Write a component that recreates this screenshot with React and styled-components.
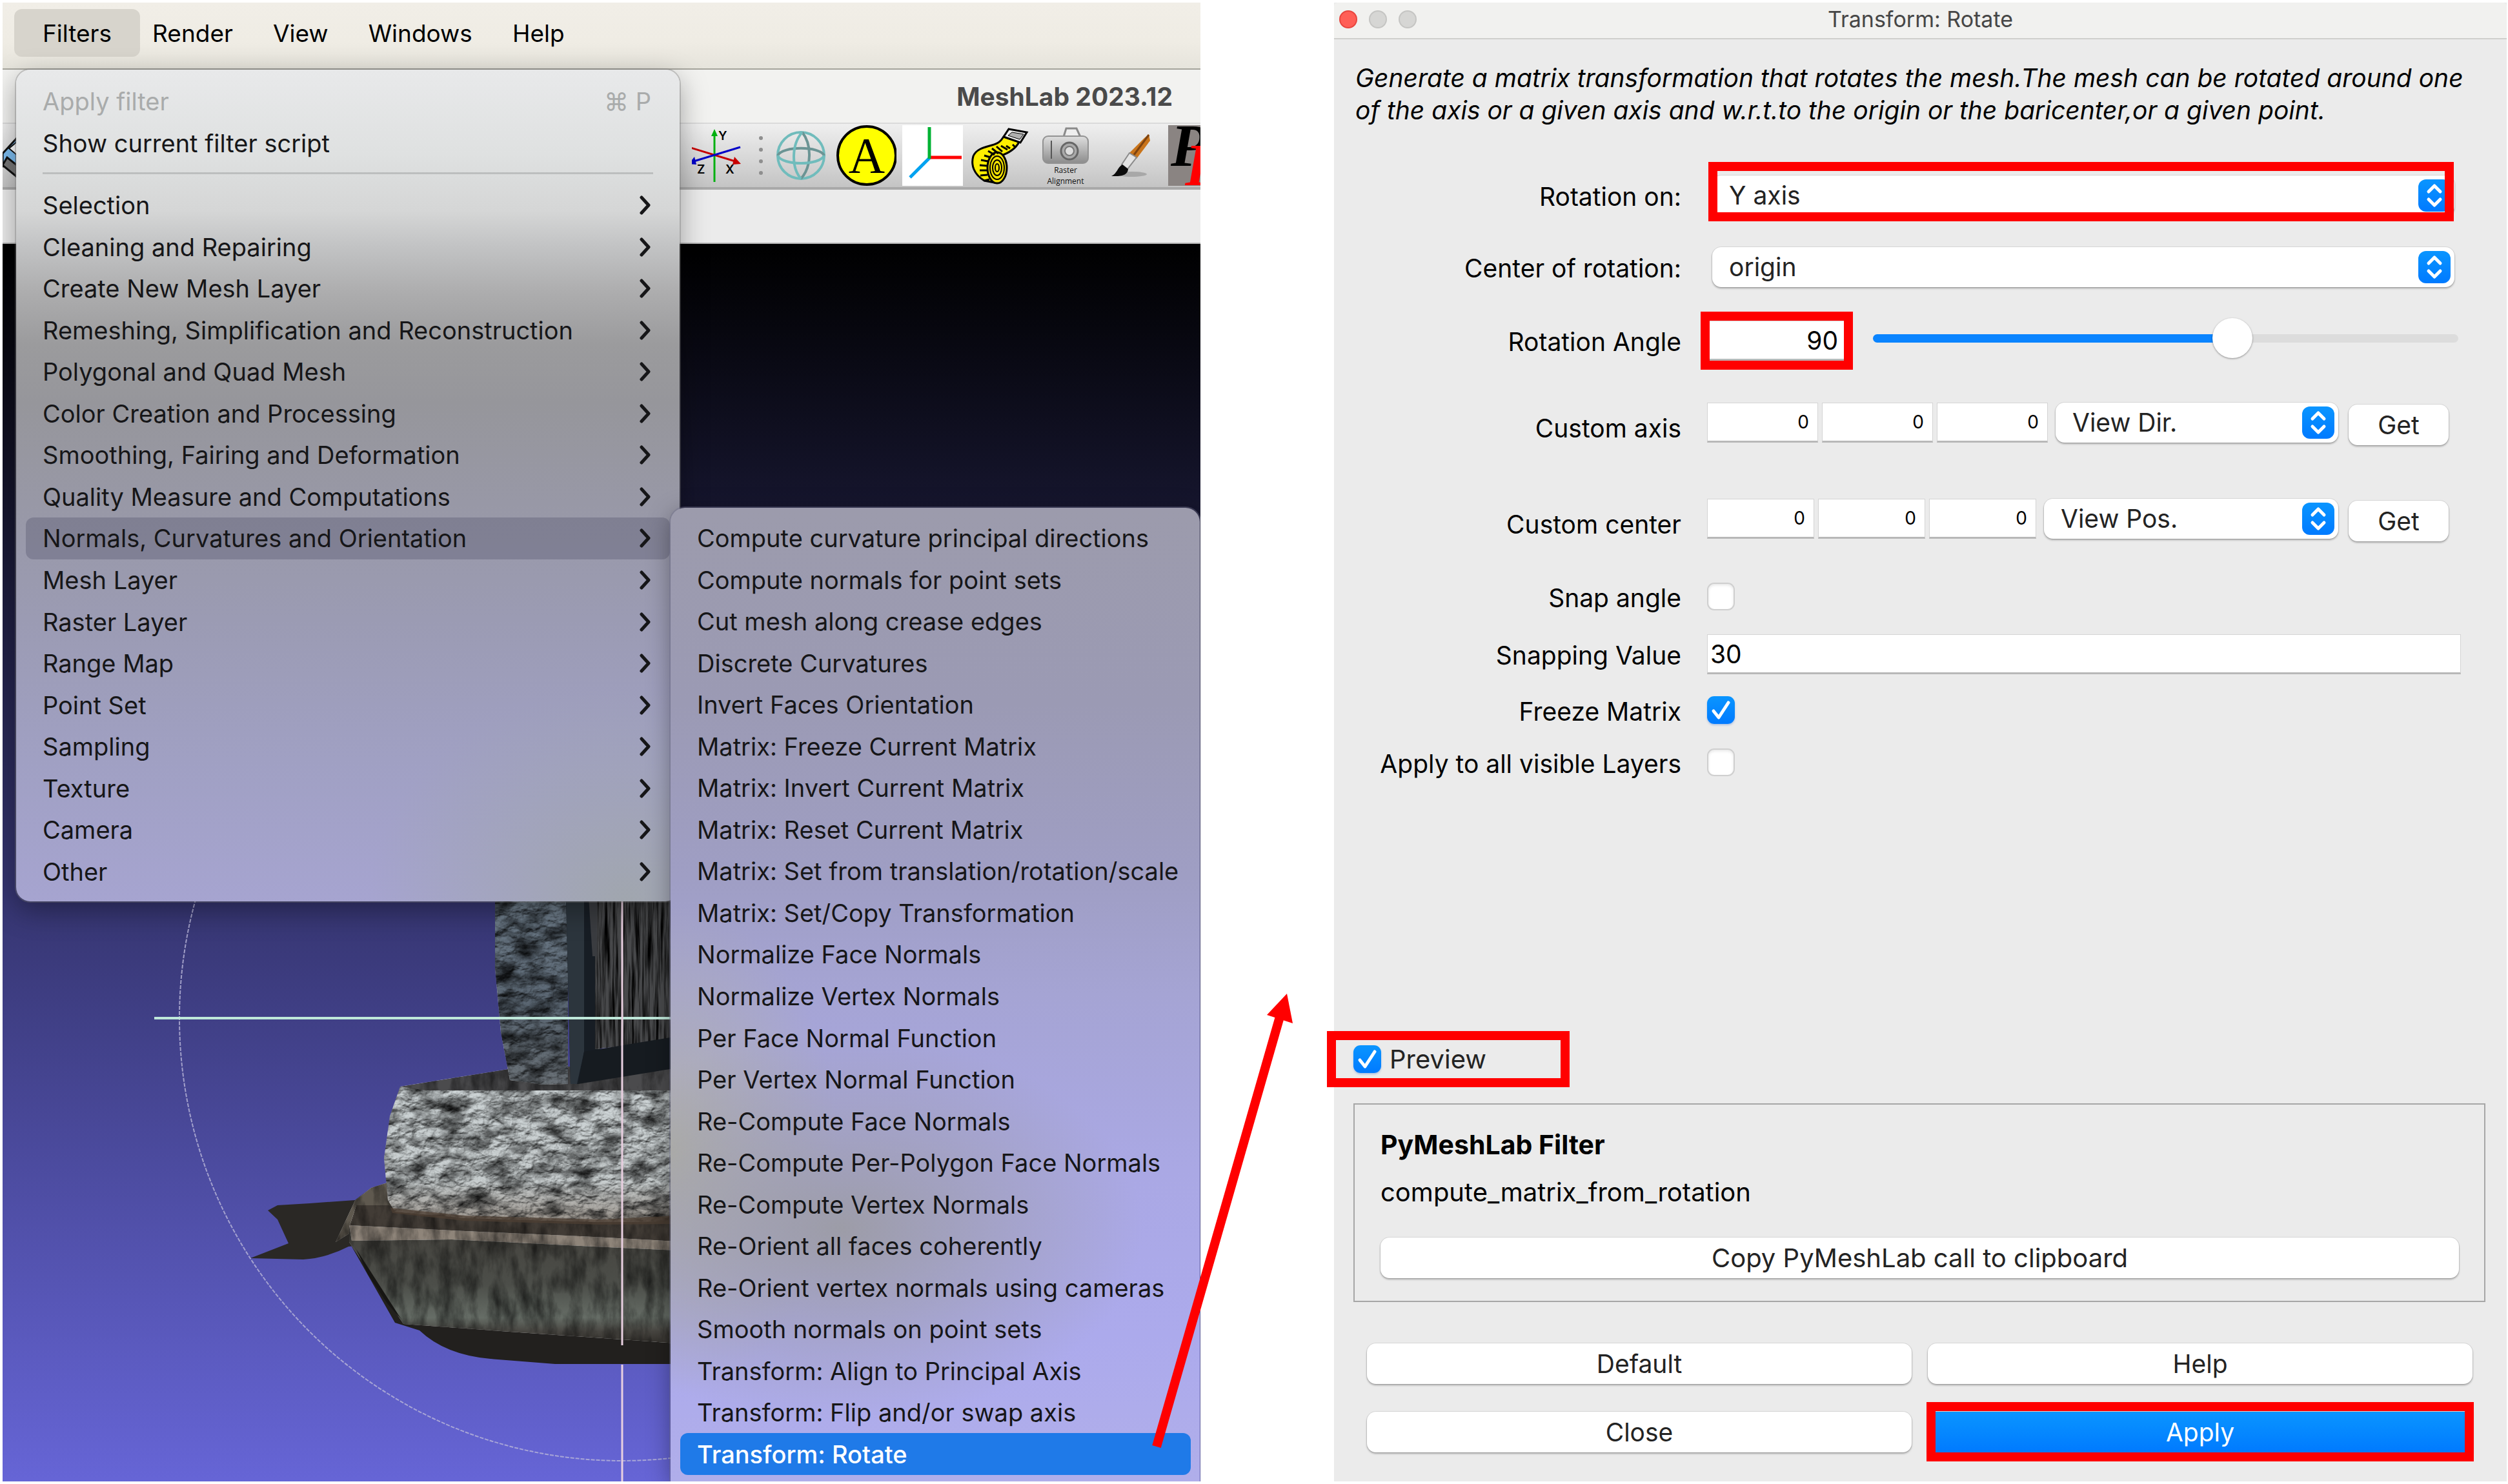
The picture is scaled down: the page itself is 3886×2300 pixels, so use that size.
import React from "react";
import styled, { createGlobalStyle, css } from "styled-components";

const FONT = '"Inter", "Liberation Sans", "DejaVu Sans", sans-serif';
const RED = "#ff0000";

const GlobalStyle = createGlobalStyle`
  *, *::before, *::after { box-sizing: border-box; }
  body { margin: 0; background: #ffffff; font-family: ${FONT}; }
  button, input, select { font: inherit; color: inherit; margin: 0; }
`;

/* ---------- page ---------- */

const Page = styled.main`
  position: relative;
  display: grid;
  grid-template-columns: 1856fr 1817fr;
  gap: 207px;
  min-height: 100vh;
  padding: 4px 2px 4px 4px;
  font-size: 38px;
  line-height: 1;
  color: #000;
`;

/* ---------- main window ---------- */

const MainWindow = styled.section`
  position: relative;
  display: flex;
  flex-direction: column;
  overflow: hidden;
  min-width: 0;
`;

const MenuBar = styled.nav`
  display: flex;
  align-items: center;
  height: 104px;
  padding: 0 18px 8px;
  background: linear-gradient(#f1eee7 0%, #efece4 60%, #e6e4dc 100%);
  border-bottom: 2px solid #a5a49c;
`;

const MenuTitle = styled.button`
  height: 74px;
  padding: 0 ${(p) => (p.$open ? 44 : 31)}px;
  margin-right: ${(p) => (p.$open ? -12 : 0)}px;
  border: 0;
  border-radius: 12px;
  background: ${(p) => (p.$open ? "#d7d4cc" : "transparent")};
  font-size: 37px;
`;

const TitleBar = styled.header`
  display: flex;
  align-items: center;
  justify-content: flex-end;
  height: 84px;
  padding-right: 43px;
  background: #f2f2f0;
  border-bottom: 2px solid #dadada;
`;

const WindowTitle = styled.h1`
  margin: 0;
  font-size: 39px;
  font-weight: 700;
  color: #4a4a4a;
`;

const ToolBar = styled.div`
  display: flex;
  align-items: center;
  justify-content: flex-end;
  gap: 9px;
  height: 102px;
  background: linear-gradient(#efefef, #c4c4c4);
  border-bottom: 4px solid #a9a9a9;
`;

const ToolButton = styled.button`
  flex: none;
  width: ${(p) => p.$width || 94}px;
  height: 94px;
  margin-right: ${(p) => (p.$first ? "auto" : "0")};
  padding: 0;
  border: 0;
  background: transparent;
  overflow: hidden;
  svg { display: block; height: 94px; }
`;

const Grip = styled.svg`
  flex: none;
  display: block;
`;

const TabStrip = styled.div`
  height: 84px;
  background: #ebebeb;
  border-bottom: 2px solid #b5b5b5;
`;

const Viewport = styled.div`
  flex: 1;
  display: grid;
  min-height: 0;
  background: linear-gradient(#000000, #6665d6);
`;

const Scene = styled.svg`
  display: block;
  width: 100%;
  height: 100%;
`;

/* ---------- menus ---------- */

const menuPanel = css`
  position: absolute;
  display: flex;
  flex-direction: column;
  color: #161618;
`;

const FilterMenu = styled.div`
  ${menuPanel}
  top: 104px;
  left: 21px;
  width: 1028px;
  padding: 17px 15px 14px;
  border-radius: 22px;
  background:
    radial-gradient(ellipse 400px 330px at 92% 100%, rgba(160, 166, 172, 0.95), rgba(160, 164, 190, 0) 100%),
    linear-gradient(#e8e9ea 0%, #dfe1e1 10%, #d5d6d6 17%, #c3c4c5 21%, #acacad 27%, #9b9b9d 33%, #96969b 40%,
      #9898a6 52%, #9b9bb3 66%, #a0a0c3 83%, #a6a4d0 100%);
  box-shadow: 0 0 0 2px rgba(120, 120, 120, 0.35), 0 14px 44px rgba(0, 0, 0, 0.35);
`;

const SubMenu = styled.div`
  ${menuPanel}
  top: 783px;
  right: 1px;
  bottom: 0;
  left: 1035px;
  padding: 15px 14px 10px 15px;
  border-radius: 22px 22px 0 0;
  background:
    radial-gradient(ellipse 470px 300px at 32% 74%, rgba(155, 155, 160, 0.9), rgba(160, 160, 190, 0) 100%),
    radial-gradient(ellipse 260px 380px at 0% 66%, rgba(176, 176, 168, 0.95), rgba(170, 170, 200, 0) 100%),
    linear-gradient(#9c9bac 0%, #9b9ab4 20%, #9f9ec4 38%, #a5a4d4 50%, #aaa8e4 68%, #acaaec 85%, #b0aeea 100%);
  box-shadow: 0 0 0 2px rgba(110, 110, 140, 0.4), 0 8px 36px rgba(0, 0, 0, 0.35);
`;

const MenuList = styled.ul`
  display: grid;
  grid-template-columns: minmax(0, 1fr);
  grid-auto-rows: 1fr;
  height: ${(p) => (p.$height ? `${p.$height}px` : "auto")};
  flex: ${(p) => (p.$height ? "none" : "1")};
  margin: 0;
  padding: 0;
  list-style: none;
`;

const MenuItem = styled.button`
  display: flex;
  align-items: center;
  justify-content: space-between;
  width: 100%;
  height: 100%;
  padding: 0 29px 0 26px;
  border: 0;
  border-radius: 12px;
  white-space: nowrap;
  text-align: left;
  background: ${(p) => (p.$selected ? "#1f7ae8" : p.$open ? "rgba(84, 84, 108, 0.36)" : "transparent")};
  color: ${(p) => (p.$selected ? "#ffffff" : "#161618")};
  font-weight: ${(p) => (p.$selected ? 500 : 400)};

  &:disabled { color: #a9abab; }
`;

const Divider = styled.hr`
  width: 946px;
  height: 3px;
  margin: 13px 26px 16px;
  border: 0;
  background: #bcbebe;
`;

/* ---------- dialog ---------- */

const Dialog = styled.section`
  display: flex;
  flex-direction: column;
  min-width: 0;
  background: #ebebeb;
  font-size: 39px;
`;

const DialogBar = styled.header`
  display: grid;
  grid-template-columns: 1fr auto 1fr;
  align-items: center;
  height: 57px;
  padding: 0 16px 4px;
  background: #f1f1ef;
  border-bottom: 2px solid #cfcfcc;
  border-radius: 6px 6px 0 0;
`;

const Lights = styled.div`
  display: flex;
  gap: 18px;
  margin-left: -8px;
`;

const Light = styled.button`
  width: 28px;
  height: 28px;
  padding: 0;
  border-radius: 50%;
  border: 2px solid ${(p) => (p.$on ? "#e8463f" : "#c5c5c3")};
  background: ${(p) => (p.$on ? "#ff5f57" : "#d6d6d4")};
`;

const DialogTitle = styled.h2`
  margin: 0;
  font-size: 34px;
  font-weight: 400;
  color: #464646;
`;

const Description = styled.p`
  margin: 0;
  padding: 35px 40px 0 33px;
  line-height: 50px;
  font-style: italic;
`;

const Form = styled.form`
  display: flex;
  flex: 1;
  flex-direction: column;
`;

const Row = styled.div`
  display: grid;
  grid-template-columns: 538px 1fr;
  column-gap: 40px;
  align-items: center;
  margin-top: ${(p) => p.$gap}px;
  padding-right: ${(p) => (p.$wide ? 71 : 81)}px;
`;

const RowLabel = styled.label`
  justify-self: end;
  padding-top: ${(p) => (p.$drop ? 17 : 3)}px;
`;

const Controls = styled.div`
  position: relative;
  display: flex;
  align-items: center;
  height: 62px;
  padding-left: ${(p) => (p.$inset ? 8 : 0)}px;
  padding-right: ${(p) => p.$end || 0}px;
`;

const highlight = css`
  position: relative;
  &::after {
    content: "";
    position: absolute;
    inset: ${(p) => p.$mark};
    border: 14px solid ${RED};
    pointer-events: none;
  }
`;

const Marked = styled.div`
  ${highlight}
  display: flex;
  flex: ${(p) => (p.$grow ? 1 : "none")};
`;

const SelectBox = styled.span`
  display: grid;
  flex: 1;
  align-items: center;
`;

const Select = styled.select`
  grid-area: 1 / 1;
  width: 100%;
  height: 62px;
  padding: 0 60px 0 26px;
  border: 0;
  border-radius: 14px;
  appearance: none;
  line-height: 62px;
  background: #ffffff;
  color: #232323;
  box-shadow: 0 0 0 1px rgba(0, 0, 0, 0.08), 0 2px 3px rgba(0, 0, 0, 0.3);
`;

const Stepper = styled.svg`
  grid-area: 1 / 1;
  justify-self: end;
  margin-right: 6px;
  pointer-events: none;
`;

const Field = styled.input`
  width: ${(p) => (p.$width ? `${p.$width}px` : "100%")};
  height: 62px;
  padding: 0 ${(p) => p.$pad || 4}px;
  border: 1px solid #d4d4d4;
  border-bottom: 3px solid #b8b8b8;
  border-radius: 0;
  outline: 0;
  background: #ffffff;
  font-size: ${(p) => (p.$small ? 28 : 39)}px;
  text-align: ${(p) => (p.$right ? "right" : "left")};
`;

const Triple = styled.div`
  display: flex;
  gap: 6px;
  margin-right: 12px;
`;

const Slider = styled.input`
  flex: 1;
  min-width: 0;
  height: 54px;
  margin: 0 0 8px 41px;
  appearance: none;
  background: transparent;
  &::-webkit-slider-runnable-track {
    height: 13px;
    border-radius: 7px;
    background: linear-gradient(to right, #0a84ff 61%, #dcdcdc 61%);
  }
  &::-webkit-slider-thumb {
    appearance: none;
    width: 62px;
    height: 62px;
    margin-top: -25px;
    border-radius: 50%;
    background: #ffffff;
    box-shadow: 0 1px 3px rgba(0, 0, 0, 0.4);
  }
`;

const CheckBox = styled.span`
  display: inline-grid;
  width: 43px;
  height: 43px;
  svg { grid-area: 1 / 1; width: 43px; height: 43px; pointer-events: none; }
`;

const CheckInput = styled.input`
  grid-area: 1 / 1;
  appearance: none;
  width: 43px;
  height: 43px;
  border-radius: 11px;
  border: 2px solid #cfcfcf;
  background: #ffffff;
  box-shadow: inset 0 2px 4px rgba(0, 0, 0, 0.1);
  &:checked {
    border: 0;
    background: linear-gradient(#0a95ff, #007aff);
    box-shadow: 0 2px 3px rgba(0, 80, 200, 0.25);
  }
`;

const PushButton = styled.button`
  height: 63px;
  width: ${(p) => (p.$width ? `${p.$width}px` : "100%")};
  flex: none;
  padding: 0;
  border: 0;
  border-radius: ${(p) => (p.$primary ? 0 : 14)}px;
  background: ${(p) => (p.$primary ? "linear-gradient(#0a95ff, #007aff)" : "#ffffff")};
  color: ${(p) => (p.$primary ? "#ffffff" : "#232323")};
  box-shadow: 0 0 0 1px rgba(0, 0, 0, 0.08), 0 2px 3px rgba(0, 0, 0, 0.3);
`;

const GetSlot = styled.div`
  margin: 6px 0 0 16px;
`;

const PreviewRow = styled.div`
  display: flex;
  margin: auto 0 47px 30px;
`;

const PreviewLabel = styled.label`
  ${highlight}
  display: flex;
  align-items: center;
  gap: 13px;
  min-width: 290px;
  font-size: 40px;
  color: #232323;
`;

const FilterBox = styled.section`
  margin: 0 33px 64px 30px;
  padding: 42px 39px 35px 40px;
  border: 2px solid #a6a6a6;
  font-size: 40px;
`;

const FilterHeading = styled.h3`
  margin: 0;
  font-size: 41px;
  font-weight: 700;
`;

const FilterName = styled.p`
  margin: 33px 0 50px;
`;

const Actions = styled.div`
  display: grid;
  grid-template-columns: 1fr 1fr;
  gap: 43px 25px;
  padding: 0 53px 45px 51px;
`;

const ArrowLayer = styled.svg`
  position: absolute;
  inset: 0;
  width: 100%;
  height: 100%;
  pointer-events: none;
`;

/* ---------- data ---------- */

const BAR = ["Filters", "Render", "View", "Windows", "Help"];

const GROUPS = [
  "Selection",
  "Cleaning and Repairing",
  "Create New Mesh Layer",
  "Remeshing, Simplification and Reconstruction",
  "Polygonal and Quad Mesh",
  "Color Creation and Processing",
  "Smoothing, Fairing and Deformation",
  "Quality Measure and Computations",
  "Normals, Curvatures and Orientation",
  "Mesh Layer",
  "Raster Layer",
  "Range Map",
  "Point Set",
  "Sampling",
  "Texture",
  "Camera",
  "Other",
];

const FILTERS = [
  "Compute curvature principal directions",
  "Compute normals for point sets",
  "Cut mesh along crease edges",
  "Discrete Curvatures",
  "Invert Faces Orientation",
  "Matrix: Freeze Current Matrix",
  "Matrix: Invert Current Matrix",
  "Matrix: Reset Current Matrix",
  "Matrix: Set from translation/rotation/scale",
  "Matrix: Set/Copy Transformation",
  "Normalize Face Normals",
  "Normalize Vertex Normals",
  "Per Face Normal Function",
  "Per Vertex Normal Function",
  "Re-Compute Face Normals",
  "Re-Compute Per-Polygon Face Normals",
  "Re-Compute Vertex Normals",
  "Re-Orient all faces coherently",
  "Re-Orient vertex normals using cameras",
  "Smooth normals on point sets",
  "Transform: Align to Principal Axis",
  "Transform: Flip and/or swap axis",
  "Transform: Rotate",
];

/* ---------- drawings ---------- */

const Chevron = () => (
  <svg width="18" height="30" viewBox="0 0 18 30" fill="none" aria-hidden="true">
    <path d="M3 3 L14 15 L3 27" stroke="#161618" strokeWidth="5" strokeLinecap="round" strokeLinejoin="round" />
  </svg>
);

const UpDown = () => (
  <Stepper width="50" height="50" viewBox="0 0 50 50" fill="none" aria-hidden="true">
    <defs>
      <linearGradient id="stepperFill" x1="0" y1="0" x2="0" y2="1">
        <stop offset="0" stopColor="#0a95ff" />
        <stop offset="1" stopColor="#007aff" />
      </linearGradient>
    </defs>
    <rect width="50" height="50" rx="12" fill="url(#stepperFill)" />
    <path d="M16 19 L25 10 L34 19 M16 31 L25 40 L34 31" stroke="#fff" strokeWidth="5" strokeLinecap="round" strokeLinejoin="round" />
  </Stepper>
);

const Tick = () => (
  <svg viewBox="0 0 43 43" fill="none" aria-hidden="true">
    <path d="M10 23 L18 33 L33 10" stroke="#fff" strokeWidth="5" strokeLinecap="round" strokeLinejoin="round" />
  </svg>
);

const LayersIcon = () => (
  <svg width="22" viewBox="0 0 22 94" aria-hidden="true">
    <path d="M0 44 L22 20 V60 L0 64 Z" fill="#7dbdf0" stroke="#111" strokeWidth="3" />
    <path d="M10 36 L22 26 V46 Z" fill="#fff" stroke="#111" strokeWidth="2" />
    <path d="M0 62 L7 50 L22 62 V80 Z" fill="#777" stroke="#111" strokeWidth="3" />
  </svg>
);

const AxesIcon = () => (
  <svg width="94" viewBox="12 0 94 94" fontFamily={FONT} fontSize="19" fontWeight="600" aria-hidden="true">
    <path d="M47 88 V14" stroke="#00b010" strokeWidth="3" />
    <path d="M42 17 L47 6 L52 17 Z" fill="#00b010" />
    <path d="M7 34 L79 56" stroke="#c80000" strokeWidth="3" />
    <path d="M78 49 L88 60 L75 61 Z" fill="#c80000" />
    <path d="M87 34 L15 56" stroke="#0000c8" strokeWidth="3" />
    <path d="M16 49 L7 60 L19 61 Z" fill="#0000c8" />
    <text x="53" y="23">Y</text>
    <text x="20" y="75">Z</text>
    <text x="64" y="75">X</text>
  </svg>
);

const GlobeIcon = () => (
  <svg width="94" viewBox="0 0 94 94" fill="none" strokeWidth="4" aria-hidden="true">
    <circle cx="49" cy="47" r="36" stroke="#70bcbc" />
    <path d="M13 47 C20 32 78 32 85 47" stroke="#6b9494" />
    <path d="M51 11 C66 30 66 64 49 83" stroke="#6b9494" />
    <path d="M13 47 C20 63 78 63 85 47" stroke="#70bcbc" />
    <path d="M51 11 C34 30 34 66 49 83" stroke="#70bcbc" />
  </svg>
);

const LetterIcon = () => (
  <svg width="94" viewBox="0 0 94 94" aria-hidden="true">
    <circle cx="48" cy="47" r="45" fill="#ffff00" stroke="#000" strokeWidth="4" />
    <text x="48" y="73" textAnchor="middle" fontFamily='"Liberation Serif", serif' fontSize="78">A</text>
  </svg>
);

const TriadIcon = () => (
  <svg width="94" viewBox="0 0 94 94" aria-hidden="true">
    <rect width="94" height="94" fill="#fff" />
    <path d="M43 50 L12 81" stroke="#00a2f0" strokeWidth="5" />
    <path d="M43 50 H92" stroke="#f00" strokeWidth="5" />
    <path d="M42 52 V3" stroke="#00b233" strokeWidth="5" />
  </svg>
);

const TapeIcon = () => (
  <svg width="94" viewBox="0 0 94 94" stroke="#000" aria-hidden="true">
    <path d="M54 18 L78 26 C72 38 60 44 48 48 C38 54 34 70 40 89 L24 86 C8 76 3 62 7 48 C12 36 26 34 36 31 C47 28 50 24 54 18 Z" fill="#ffee00" strokeWidth="3" />
    <path d="M62 6 L90 11 L80 27 L54 18 Z" fill="#eee" strokeWidth="3" />
    <path d="M67 11 L85 14 L79 22 L61 16 Z" fill="#b0b0b0" strokeWidth="1" />
    <ellipse cx="44" cy="66" rx="15" ry="24" fill="#f4e200" strokeWidth="3" />
    <ellipse cx="44" cy="66" rx="11" ry="18" fill="none" strokeWidth="2" />
    <ellipse cx="44" cy="66" rx="7" ry="12" fill="none" strokeWidth="2" />
    <ellipse cx="44" cy="66" rx="3" ry="6" fill="none" strokeWidth="2" />
    <path d="M24 47 L34 50 M19 54 L30 56 M17 62 L28 63 M17 70 L28 70 M18 78 L29 77 M24 86 L32 84 M30 40 L40 46 M36 36 L46 44 M43 33 L52 41 M50 32 L60 38 M58 32 L64 36 M68 30 L72 34" strokeWidth="3" fill="none" />
  </svg>
);

const CameraIcon = () => (
  <svg width="94" viewBox="0 0 94 94" aria-hidden="true">
    <defs>
      <linearGradient id="cameraBody" x1="0" y1="0" x2="0" y2="1">
        <stop offset="0" stopColor="#dedede" />
        <stop offset="1" stopColor="#8c8c8c" />
      </linearGradient>
    </defs>
    <path d="M44 18 L48 5 H64 L70 18 Z" fill="#eee" stroke="#8a8a8a" strokeWidth="3" />
    <rect x="12" y="17" width="70" height="42" rx="8" fill="url(#cameraBody)" stroke="#929292" strokeWidth="2" />
    <path d="M25 24 V52" stroke="#555" strokeWidth="2" />
    <circle cx="53" cy="40" r="13" fill="#aaa" stroke="#666" strokeWidth="3" />
    <circle cx="53" cy="40" r="7" fill="#ddd" stroke="#777" strokeWidth="2" />
    <g fontFamily='"Open Sans", sans-serif' fontSize="12" textAnchor="middle" fill="#111">
      <text x="47" y="74">Raster</text>
      <text x="47" y="91">Alignment</text>
    </g>
  </svg>
);

const BrushIcon = () => (
  <svg width="94" viewBox="0 0 94 94" aria-hidden="true">
    <ellipse cx="46" cy="76" rx="24" ry="4" fill="#a8a8a8" />
    <path d="M73 14 L75 24 L54 52 L43 43 L66 20 Z" fill="#c9741a" />
    <path d="M73 15 L50 46" stroke="#7d4310" strokeWidth="3" />
    <path d="M43 43 L54 50 L40 68 L31 61 Z" fill="#e4e4e4" stroke="#8a8a8a" strokeWidth="2" />
    <path d="M32 61 L41 68 C40 80 26 79 15 79 C24 75 24 66 32 61 Z" fill="#0c0c0c" />
  </svg>
);

const LettersIcon = () => (
  <svg width="50" viewBox="0 0 50 94" fontFamily='"Liberation Serif", serif' fontWeight="700" fontStyle="italic" aria-hidden="true">
    <rect width="50" height="94" fill="#8a8482" />
    <text x="4" y="63" fontSize="94">P</text>
    <text x="26" y="93" fontSize="94" fill="#f00">R</text>
  </svg>
);

const MeshScene = () => (
  <Scene viewBox="4 378 1856 1918" preserveAspectRatio="xMinYMax slice" role="img" aria-label="Stone monument in the 3D viewport">
    <defs>
      <filter id="rough" x="0" y="0" width="100%" height="100%" colorInterpolationFilters="sRGB">
        <feTurbulence type="fractalNoise" baseFrequency="0.05 0.07" numOctaves="6" seed="7" result="n" />
        <feDiffuseLighting in="n" surfaceScale="5" lightingColor="#ffffff" result="l">
          <feDistantLight azimuth="250" elevation="62" />
        </feDiffuseLighting>
        <feTurbulence type="fractalNoise" baseFrequency="0.025 0.04" numOctaves="6" seed="21" result="m" />
        <feColorMatrix in="m" type="matrix" values="1.9 0 0 0 -0.12  1.9 0 0 0 -0.12  1.9 0 0 0 -0.12  0 0 0 0 1" result="p" />
        <feBlend in="SourceGraphic" in2="l" mode="multiply" result="b" />
        <feBlend in="b" in2="p" mode="multiply" result="c" />
        <feComposite in="c" in2="SourceAlpha" operator="in" />
      </filter>
      <filter id="soft" x="0" y="0" width="100%" height="100%" colorInterpolationFilters="sRGB">
        <feTurbulence type="fractalNoise" baseFrequency="0.05 0.02" numOctaves="6" seed="3" result="n" />
        <feColorMatrix in="n" type="matrix" values="1.1 0 0 0 0.28  1.1 0 0 0 0.28  1.1 0 0 0 0.28  0 0 0 0 1" result="p" />
        <feBlend in="SourceGraphic" in2="p" mode="multiply" result="b" />
        <feComposite in="b" in2="SourceAlpha" operator="in" />
      </filter>
      <filter id="grooves" x="0" y="0" width="100%" height="100%" colorInterpolationFilters="sRGB">
        <feTurbulence type="fractalNoise" baseFrequency="0.24 0.01" numOctaves="4" seed="11" result="n" />
        <feColorMatrix in="n" type="matrix" values="2.4 0 0 0 -0.5  2.4 0 0 0 -0.5  2.4 0 0 0 -0.5  0 0 0 0 1" result="p" />
        <feBlend in="SourceGraphic" in2="p" mode="multiply" result="b" />
        <feComposite in="b" in2="SourceAlpha" operator="in" />
      </filter>
      <linearGradient id="slab" x1="0" y1="0" x2="0" y2="1">
        <stop offset="0" stopColor="#71808e" />
        <stop offset="0.6" stopColor="#5a6672" />
        <stop offset="1" stopColor="#6b7278" />
      </linearGradient>
      <linearGradient id="block" x1="0" y1="0" x2="0" y2="1">
        <stop offset="0" stopColor="#cfd6d8" />
        <stop offset="0.7" stopColor="#cad0d1" />
        <stop offset="1" stopColor="#9c958d" />
      </linearGradient>
      <linearGradient id="base" x1="0" y1="0" x2="0" y2="1">
        <stop offset="0" stopColor="#45433e" />
        <stop offset="0.5" stopColor="#4c4e49" />
        <stop offset="0.78" stopColor="#666d66" />
        <stop offset="0.9" stopColor="#474540" />
        <stop offset="1" stopColor="#33302c" />
      </linearGradient>
    </defs>

    <circle cx="964" cy="1578" r="686" fill="none" stroke="#b9b7d8" strokeWidth="2" strokeDasharray="6 2" opacity="0.8" />

    <path d="M415 1876 L430 1868 L480 1865 L550 1860 L575 1841 L600 1833 L620 1850 L560 1930 L540 1932 Q505 1950 470 1952 L388 1950 L447 1927 L430 1890 Z" fill="#2a2825" />
    <path d="M550 1861 L575 1841 L600 1833 L612 1872 L552 1905 L520 1925 Z" fill="#5f594f" filter="url(#soft)" />
    <path d="M541 1925 L612 2050 L650 2062 Q690 2100 760 2106 L860 2114 H1050 V2060 Z" fill="#22201e" />
    <path d="M552 1868 L602 1868 L1050 1885 V1935 L541 1902 Z" fill="#423c36" filter="url(#soft)" />
    <path d="M541 1901 L760 1912 L1050 1928 V2082 L790 2064 L625 2052 L585 1990 L541 1925 Z" fill="url(#base)" filter="url(#soft)" />
    <path d="M541 1899 L700 1907 L920 1917 L1050 1924 V1938 L920 1932 L700 1921 L545 1923 Z" fill="#8f857a" filter="url(#soft)" />
    <path d="M552 1936 L622 2045 L600 2020 L570 1975 Z" fill="#161513" />

    <path d="M620 1684 L700 1671 L787 1657 L1050 1646 V1694 L640 1690 Z" fill="#4b4b4d" filter="url(#soft)" />
    <path d="M620 1684 L660 1690 L1050 1690 V1893 L930 1894 L720 1888 L612 1878 L601 1860 L595 1795 L604 1730 Z" fill="url(#block)" filter="url(#rough)" />
    <path d="M605 1872 L720 1884 L930 1890 L1050 1884 V1897 L930 1898 L720 1892 L608 1880 Z" fill="#4d3f33" opacity="0.75" />

    <path d="M767 1390 H880 V1680 L840 1681 L790 1674 L776 1600 L767 1500 Z" fill="url(#slab)" filter="url(#rough)" />
    <path d="M877 1390 H930 V1650 L896 1680 L884 1680 Z" fill="#171d24" />
    <path d="M877 1390 H905 V1630 L894 1680 L884 1680 Z" fill="#2c353d" />
    <path d="M922 1390 H1050 V1612 L922 1626 Z" fill="#48494b" filter="url(#grooves)" />
    <path d="M905 1630 L1050 1606 V1655 L896 1680 Z" fill="#161b20" />
    <path d="M912 1390 H925 V1482 H918 Z" fill="#3a3c40" />

    <path d="M239 1578 H1050" stroke="#bfe8da" strokeWidth="4" />
    <path d="M964 1390 V2085 M964 2115 V2300" stroke="#e8cfe0" strokeWidth="3" />
  </Scene>
);

/* ---------- parts ---------- */

const Choice = ({ id, label, options }) => (
  <SelectBox>
    <Select id={id} aria-label={label}>
      {options.map((o) => (
        <option key={o}>{o}</option>
      ))}
    </Select>
    <UpDown />
  </SelectBox>
);

const Check = ({ id, on }) => (
  <CheckBox>
    <CheckInput id={id} type="checkbox" defaultChecked={on} />
    {on && <Tick />}
  </CheckBox>
);

const VectorRow = ({ id, label, gap, cell, option }) => (
  <Row $gap={gap} $wide>
    <RowLabel htmlFor={`${id}-0`} $drop>{label}</RowLabel>
    <Controls $end={19}>
      <Triple>
        {["x", "y", "z"].map((axis, i) => (
          <Field key={axis} id={`${id}-${i}`} aria-label={`${label} ${axis}`} defaultValue="0" $width={cell} $pad={13} $small $right />
        ))}
      </Triple>
      <Choice id={`${id}-source`} label={`${label} source`} options={[option]} />
      <GetSlot>
        <PushButton type="button" $width={155}>Get</PushButton>
      </GetSlot>
    </Controls>
  </Row>
);

export default function App() {
  return (
    <Page>
      <GlobalStyle />

      <MainWindow>
        <MenuBar>
          {BAR.map((name, i) => (
            <MenuTitle key={name} type="button" $open={i === 0}>{name}</MenuTitle>
          ))}
        </MenuBar>
        <TitleBar>
          <WindowTitle>MeshLab 2023.12</WindowTitle>
        </TitleBar>
        <ToolBar>
          <ToolButton type="button" aria-label="Layers" $width={22} $first><LayersIcon /></ToolButton>
          <ToolButton type="button" aria-label="Axes"><AxesIcon /></ToolButton>
          <Grip width="8" height="64" viewBox="0 0 8 64" fill="#8e8e8e" aria-hidden="true">
            <circle cx="4" cy="5" r="3" /><circle cx="4" cy="23" r="3" /><circle cx="4" cy="41" r="3" /><circle cx="4" cy="59" r="3" />
          </Grip>
          <ToolButton type="button" aria-label="Trackball"><GlobeIcon /></ToolButton>
          <ToolButton type="button" aria-label="Labels"><LetterIcon /></ToolButton>
          <ToolButton type="button" aria-label="Show axis"><TriadIcon /></ToolButton>
          <ToolButton type="button" aria-label="Measure"><TapeIcon /></ToolButton>
          <ToolButton type="button" aria-label="Raster alignment"><CameraIcon /></ToolButton>
          <ToolButton type="button" aria-label="Paint"><BrushIcon /></ToolButton>
          <ToolButton type="button" aria-label="Reference" $width={50}><LettersIcon /></ToolButton>
        </ToolBar>
        <TabStrip />
        <Viewport>
          <MeshScene />
        </Viewport>

        <FilterMenu>
          <MenuList $height={129}>
            <li><MenuItem type="button" disabled><span>Apply filter</span><span>⌘ P</span></MenuItem></li>
            <li><MenuItem type="button">Show current filter script</MenuItem></li>
          </MenuList>
          <Divider />
          <MenuList $height={1097}>
            {GROUPS.map((name) => (
              <li key={name}>
                <MenuItem type="button" $open={name.startsWith("Normals")}>
                  {name}
                  <Chevron />
                </MenuItem>
              </li>
            ))}
          </MenuList>
        </FilterMenu>

        <SubMenu>
          <MenuList>
            {FILTERS.map((name) => (
              <li key={name}>
                <MenuItem type="button" $selected={name === "Transform: Rotate"}>{name}</MenuItem>
              </li>
            ))}
          </MenuList>
        </SubMenu>
      </MainWindow>

      <Dialog>
        <DialogBar>
          <Lights>
            <Light type="button" aria-label="Close window" $on />
            <Light type="button" aria-label="Minimise" />
            <Light type="button" aria-label="Zoom" />
          </Lights>
          <DialogTitle>Transform: Rotate</DialogTitle>
        </DialogBar>
        <Description>
          Generate a matrix transformation that rotates the mesh.The mesh can be rotated around one of the axis or a
          given axis and w.r.t.to the origin or the baricenter,or a given point.
        </Description>

        <Form onSubmit={(e) => e.preventDefault()}>
          <Row $gap={76}>
            <RowLabel htmlFor="rotation-on">Rotation on:</RowLabel>
            <Controls $inset>
              <Marked $grow $mark="-21px 1px -9px -6px">
                <Choice id="rotation-on" options={["Y axis", "X axis", "Z axis"]} />
              </Marked>
            </Controls>
          </Row>
          <Row $gap={49}>
            <RowLabel htmlFor="center">Center of rotation:</RowLabel>
            <Controls $inset>
              <Choice id="center" options={["origin", "barycenter"]} />
            </Controls>
          </Row>
          <Row $gap={52} $wide>
            <RowLabel htmlFor="angle">Rotation Angle</RowLabel>
            <Controls $end={4}>
              <Marked $mark="-14px -10px">
                <Field id="angle" defaultValue="90" $width={216} $pad={12} $right />
              </Marked>
              <Slider type="range" min="-360" max="360" defaultValue="88" aria-label="Rotation angle" />
            </Controls>
          </Row>
          <VectorRow id="axis" label="Custom axis" gap={65} cell={172} option="View Dir." />
          <VectorRow id="point" label="Custom center" gap={87} cell={166} option="View Pos." />
          <Row $gap={68}>
            <RowLabel htmlFor="snap">Snap angle</RowLabel>
            <Check id="snap" />
          </Row>
          <Row $gap={37} $wide>
            <RowLabel htmlFor="snap-value">Snapping Value</RowLabel>
            <Field id="snap-value" defaultValue="30" />
          </Row>
          <Row $gap={34}>
            <RowLabel htmlFor="freeze">Freeze Matrix</RowLabel>
            <Check id="freeze" on />
          </Row>
          <Row $gap={38}>
            <RowLabel htmlFor="all-layers">Apply to all visible Layers</RowLabel>
            <Check id="all-layers" />
          </Row>

          <PreviewRow>
            <PreviewLabel $mark="-22px -45px -22px -41px">
              <Check id="preview" on />
              Preview
            </PreviewLabel>
          </PreviewRow>

          <FilterBox>
            <FilterHeading>PyMeshLab Filter</FilterHeading>
            <FilterName>compute_matrix_from_rotation</FilterName>
            <PushButton type="button">Copy PyMeshLab call to clipboard</PushButton>
          </FilterBox>

          <Actions>
            <PushButton type="button">Default</PushButton>
            <PushButton type="button">Help</PushButton>
            <PushButton type="button">Close</PushButton>
            <Marked $mark="-15px -2px -14px -2px">
              <PushButton type="submit" $primary>Apply</PushButton>
            </Marked>
          </Actions>
        </Form>
      </Dialog>

      <ArrowLayer viewBox="0 0 3886 2300" aria-hidden="true">
        <path d="M1792 2242 L1983 1576" stroke={RED} strokeWidth="14" />
        <path d="M1994 1540 L1963 1573 L2003 1586 Z" fill={RED} />
      </ArrowLayer>
    </Page>
  );
}
